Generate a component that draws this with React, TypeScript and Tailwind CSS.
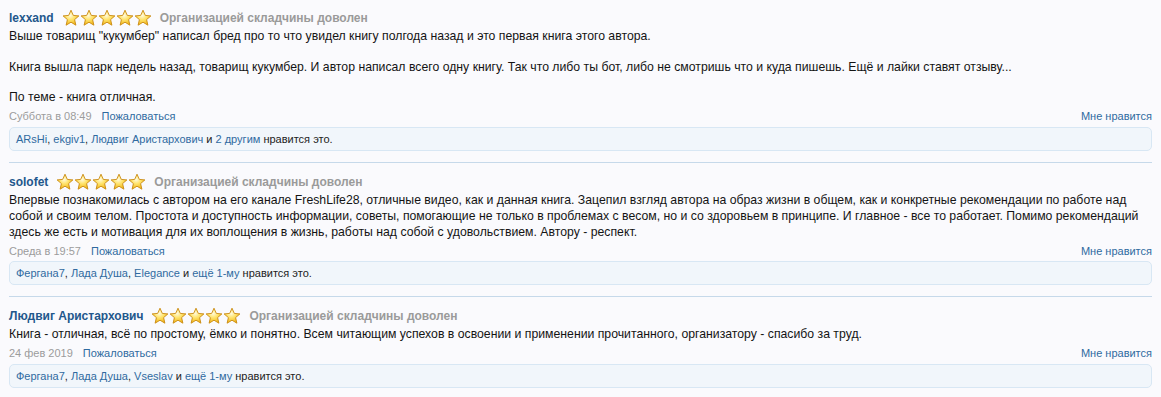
import { Fragment } from 'react';

type Post = {
  author: string;
  body: string[];
  date: string;
  likers: string[];
  more: string;
};

const posts: Post[] = [
  {
    author: 'lexxand',
    body: [
      'Выше товарищ "кукумбер" написал бред про то что увидел книгу полгода назад и это первая книга этого автора.',
      '',
      'Книга вышла парк недель назад, товарищ кукумбер. И автор написал всего одну книгу. Так что либо ты бот, либо не смотришь что и куда пишешь. Ещё и лайки ставят отзыву...',
      '',
      'По теме - книга отличная.',
    ],
    date: 'Суббота в 08:49',
    likers: ['ARsHi', 'ekgiv1', 'Людвиг Аристархович'],
    more: '2 другим',
  },
  {
    author: 'solofet',
    body: [
      'Впервые познакомилась с автором на его канале FreshLife28, отличные видео, как и данная книга. Зацепил взгляд автора на образ жизни в общем, как и конкретные рекомендации по работе над собой и своим телом. Простота и доступность информации, советы, помогающие не только в проблемах с весом, но и со здоровьем в принципе. И главное - все то работает. Помимо рекомендаций здесь же есть и мотивация для их воплощения в жизнь, работы над собой с удовольствием. Автору - респект.',
    ],
    date: 'Среда в 19:57',
    likers: ['Фергана7', 'Лада Душа', 'Elegance'],
    more: 'ещё 1-му',
  },
  {
    author: 'Людвиг Аристархович',
    body: [
      'Книга - отличная, всё по простому, ёмко и понятно. Всем читающим успехов в освоении и применении прочитанного, организатору - спасибо за труд.',
    ],
    date: '24 фев 2019',
    likers: ['Фергана7', 'Лада Душа', 'Vseslav'],
    more: 'ещё 1-му',
  },
];

function Star({ id }: { id: string }) {
  return (
    <svg width="18" height="18" viewBox="0 0 18 18">
      <defs>
        <radialGradient id={id} cx="45%" cy="35%" r="65%">
          <stop offset="0%" stopColor="#fffbe0" />
          <stop offset="45%" stopColor="#ffe36a" />
          <stop offset="100%" stopColor="#f0b418" />
        </radialGradient>
      </defs>
      <path
        d="M9 1.2 L11.3 6.4 L16.9 6.9 L12.6 10.6 L13.9 16.2 L9 13.2 L4.1 16.2 L5.4 10.6 L1.1 6.9 L6.7 6.4 Z"
        fill={`url(#${id})`}
        stroke="#c98a12"
        strokeWidth="0.9"
        strokeLinejoin="round"
      />
    </svg>
  );
}

function Stars({ prefix }: { prefix: string }) {
  return (
    <span className="flex">
      {[0, 1, 2, 3, 4].map((i) => (
        <Star key={i} id={`${prefix}-star-${i}`} />
      ))}
    </span>
  );
}

function Review({ post, index, last }: { post: Post; index: number; last: boolean }) {
  return (
    <div className={`${index === 0 ? 'pt-[9px]' : 'pt-[10px]'} ${last ? '' : 'pb-[11px] border-b border-[#c6d9ea]'}`}>
      {/* Header */}
      <div className="flex items-center h-[18px]">
        <a className="text-[12px] font-bold text-[#22578c]">{post.author}</a>
        <span className="ml-[8px]">
          <Stars prefix={`p${index}`} />
        </span>
        <span className="ml-[8px] text-[12px] font-bold text-[#9a9a9a]">Организацией складчины доволен</span>
      </div>

      {/* Body */}
      <div className="mt-[1px] text-[12.25px] leading-[16px] text-[#141414]">
        {post.body.map((line, i) => (
          <div key={i} className={line === '' ? 'h-[14.5px]' : ''}>
            {line}
          </div>
        ))}
      </div>

      {/* Meta */}
      <div className="mt-[4px] flex items-center justify-between text-[11px] leading-[14px]">
        <div className="flex gap-[10px]">
          <span className="text-[#9c9c9c]">{post.date}</span>
          <a className="text-[#2f6aa0]">Пожаловаться</a>
        </div>
        <a className="text-[#2f6aa0]">Мне нравится</a>
      </div>

      {/* Likes */}
      <div className="mt-[3.5px] rounded-[5px] border border-[#d8e7f4] bg-[#f1f6fb] px-[6px] py-[4px] text-[11px] leading-[14px] text-[#222]">
        {post.likers.map((name, i) => (
          <Fragment key={name}>
            <a className="text-[#2f6aa0]">{name}</a>
            {i < post.likers.length - 1 ? ', ' : ' '}
          </Fragment>
        ))}
        и <a className="text-[#2f6aa0]">{post.more}</a> нравится это.
      </div>
    </div>
  );
}

export default function App() {
  return (
    <div
      className="min-h-[397px] w-[1161px] bg-[#fafafd] px-[9px]"
      style={{ fontFamily: '"Liberation Sans", Arial, sans-serif' }}
    >
      {posts.map((post, i) => (
        <Review key={i} post={post} index={i} last={i === posts.length - 1} />
      ))}
    </div>
  );
}
